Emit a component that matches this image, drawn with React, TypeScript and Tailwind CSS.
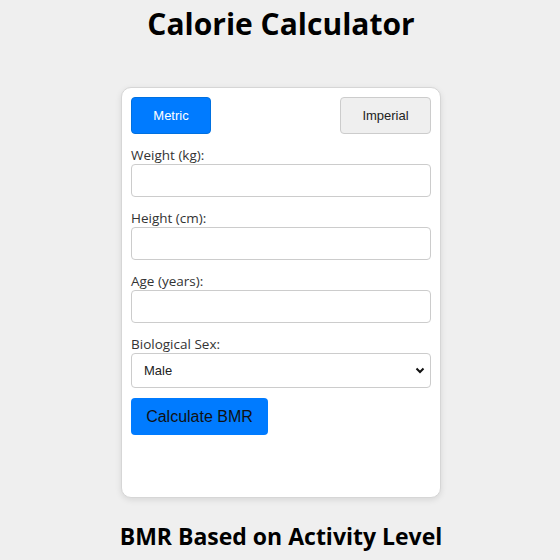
import { useState } from 'react';

const labelFont = { fontFamily: '"Open Sans", "Noto Sans", sans-serif' };

function Field({ label }: { label: string }) {
  return (
    <div className="flex flex-col">
      <label className="text-[13.5px] leading-[18px] text-[#333]" style={labelFont}>
        {label}
      </label>
      <input
        type="number"
        className="h-[33px] w-full rounded-[4px] border border-[#cccccc] bg-white px-2 outline-none"
      />
    </div>
  );
}

export default function App() {
  const [unit, setUnit] = useState<'metric' | 'imperial'>('metric');

  return (
    <div className="flex min-h-[560px] flex-col items-center bg-[#efefef] pl-[2px] font-['Liberation_Sans',Arial,sans-serif]">
      <h1
        className="mt-[2px] h-[44px] text-[30px] font-bold leading-[44px] text-black"
        style={labelFont}
      >
        Calorie Calculator
      </h1>

      <div className="mt-[41px] flex h-[411px] w-[320px] flex-col rounded-[10px] border border-[#d6d6d6] bg-white p-[9px] shadow-[0_2px_6px_rgba(0,0,0,0.1)]">
        <div className="flex justify-between">
          <button
            onClick={() => setUnit('metric')}
            className={
              unit === 'metric'
                ? 'h-[37px] w-[80px] rounded-[4px] border border-[#0070e0] bg-[#007bff] text-[13px] text-white'
                : 'h-[37px] w-[80px] rounded-[4px] border border-[#cccccc] bg-[#efefef] text-[13px] text-[#222]'
            }
          >
            Metric
          </button>
          <button
            onClick={() => setUnit('imperial')}
            className={
              unit === 'imperial'
                ? 'h-[37px] w-[91px] rounded-[4px] border border-[#0070e0] bg-[#007bff] text-[13px] text-white'
                : 'h-[37px] w-[91px] rounded-[4px] border border-[#cccccc] bg-[#efefef] text-[13px] text-[#222]'
            }
          >
            Imperial
          </button>
        </div>

        <div className="mt-[12px] flex flex-col gap-[12px]">
          <Field label={unit === 'metric' ? 'Weight (kg):' : 'Weight (lbs):'} />
          <Field label={unit === 'metric' ? 'Height (cm):' : 'Height (in):'} />
          <Field label="Age (years):" />
          <div className="flex flex-col">
            <label className="text-[13.5px] leading-[18px] text-[#333]" style={labelFont}>
              Biological Sex:
            </label>
            <div className="relative">
              <select className="h-[35px] w-full appearance-none rounded-[4px] border border-[#cccccc] bg-white pl-[12px] text-[13px] text-[#222] outline-none">
                <option>Male</option>
                <option>Female</option>
              </select>
              <svg
                className="pointer-events-none absolute right-[6px] top-[14px]"
                width="10"
                height="7"
                viewBox="0 0 10 7"
              >
                <path d="M1.5 1.5 L5 5 L8.5 1.5" fill="none" stroke="#111" strokeWidth="2" />
              </svg>
            </div>
          </div>
        </div>

        <div className="mt-[10px]">
          <button className="h-[37px] w-[137px] rounded-[4px] bg-[#007bff] text-[16px] text-[#111]">
            Calculate BMR
          </button>
        </div>
      </div>

      <h2 className="mt-[21px] text-[23px] font-bold leading-[34px] text-black" style={labelFont}>
        BMR Based on Activity Level
      </h2>
    </div>
  );
}
